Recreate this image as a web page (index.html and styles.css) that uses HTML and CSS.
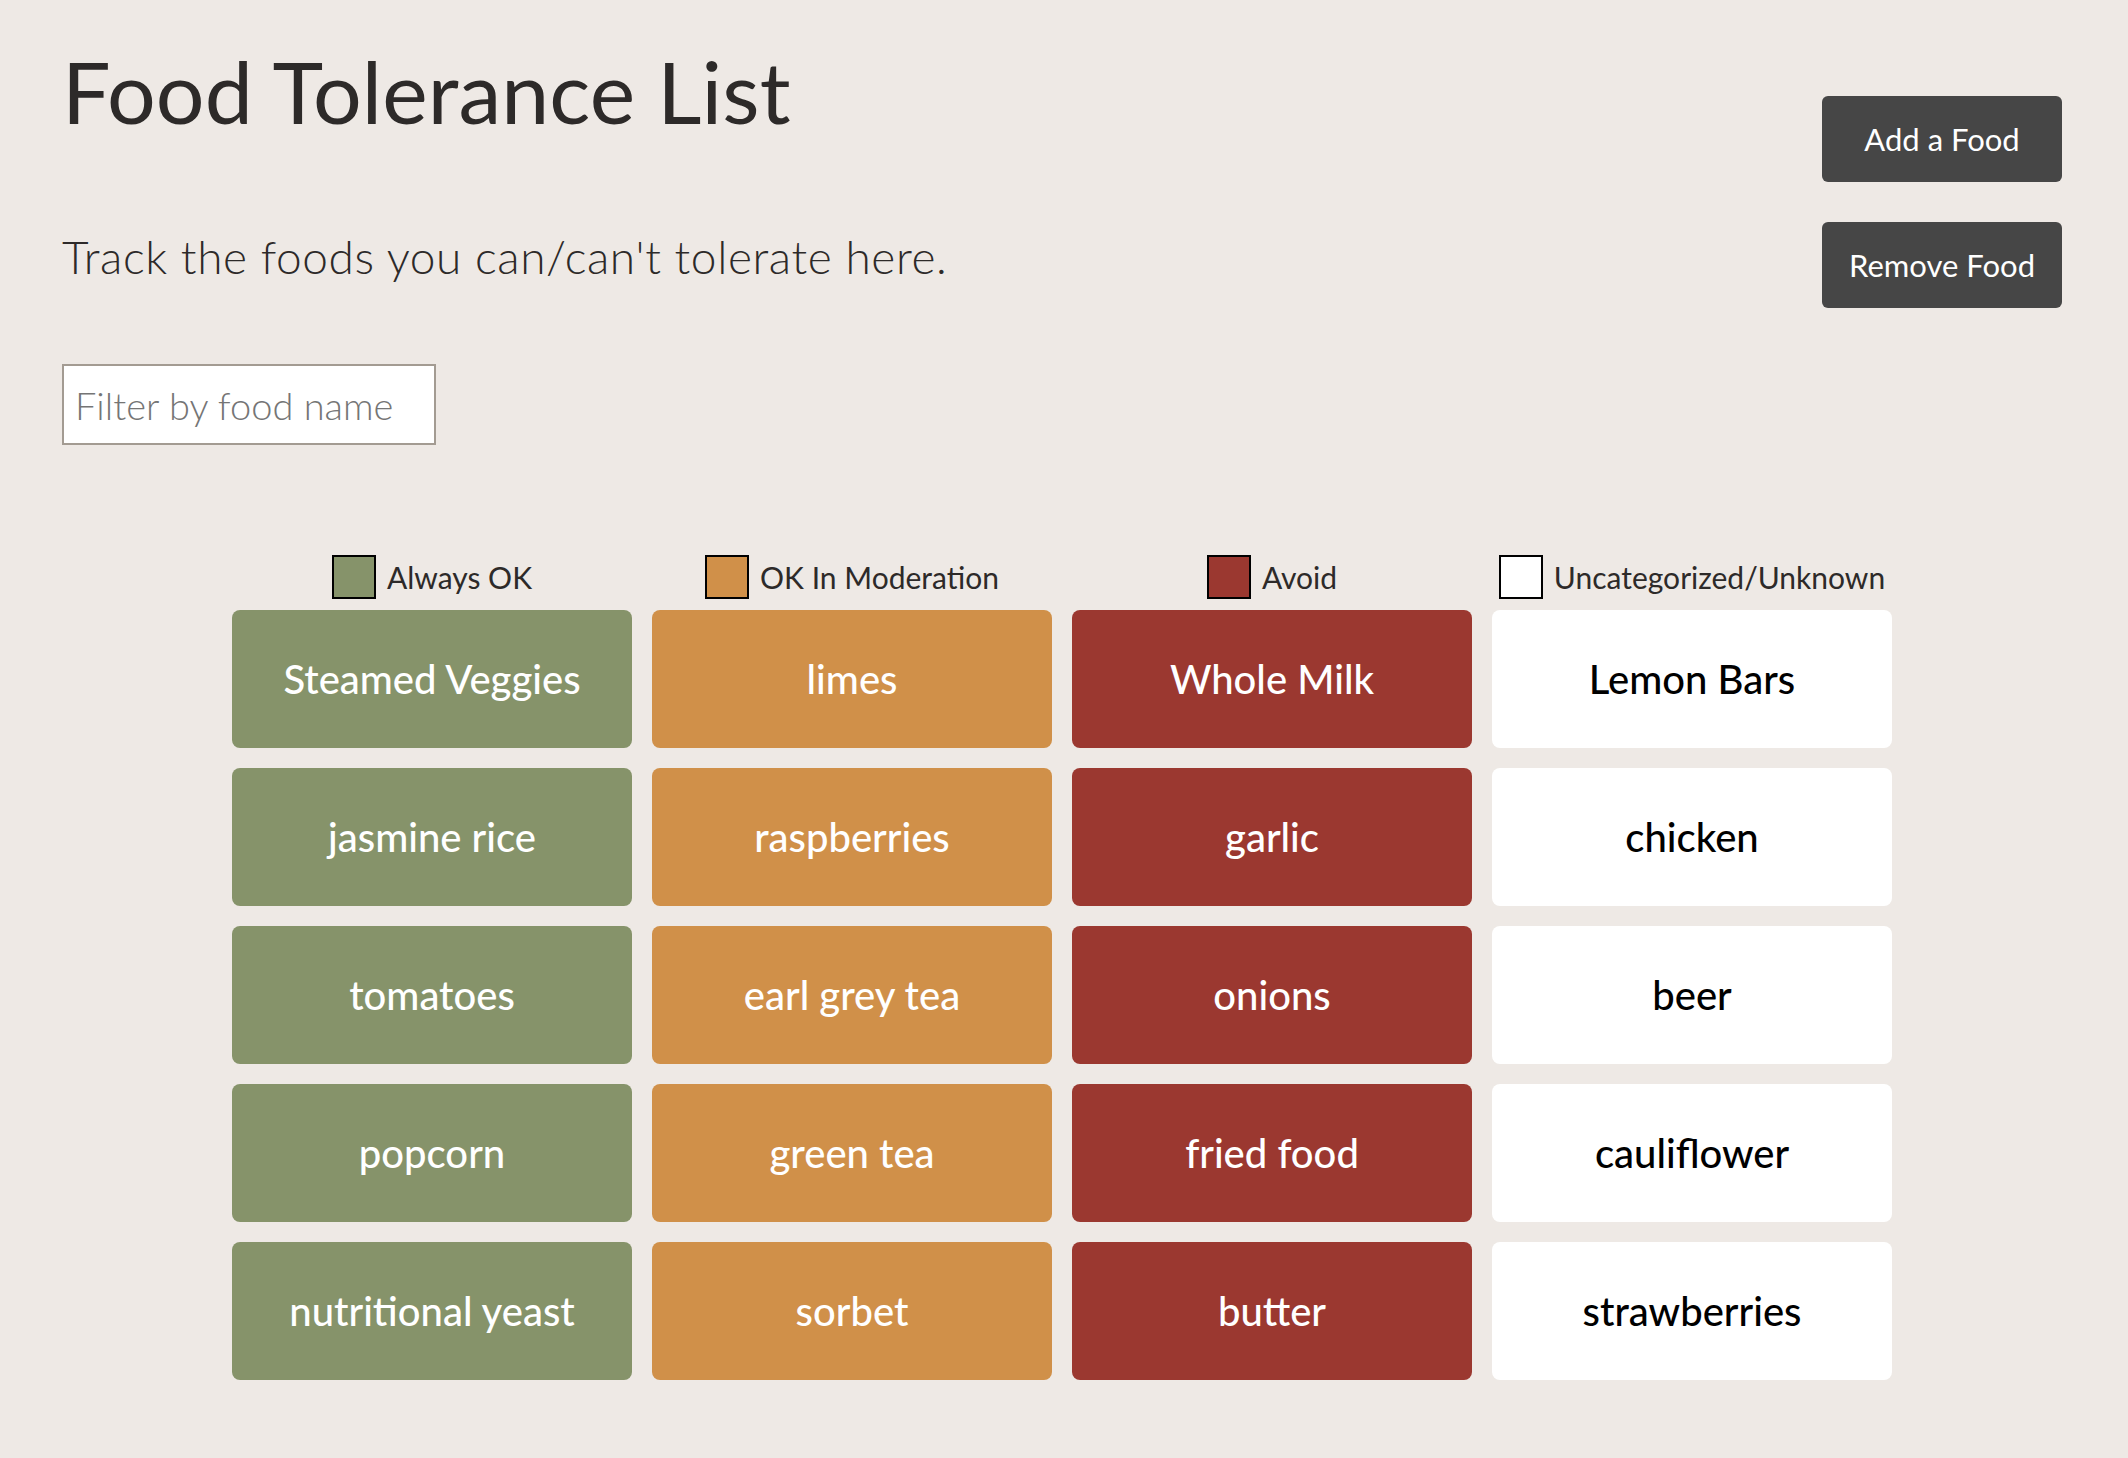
FILE: index.html
```html
<!DOCTYPE html>
<html lang="en">
<head>
<meta charset="utf-8">
<title>Food Tolerance List</title>
<link rel="stylesheet" href="styles.css">
</head>
<body>
<header class="top">
  <div class="intro">
    <h1 class="title">Food Tolerance List</h1>
    <p class="subtitle">Track the foods you can/can't tolerate here.</p>
    <input class="filter" type="text" placeholder="Filter by food name">
  </div>
  <div class="actions">
    <button class="btn">Add a Food</button>
    <button class="btn">Remove Food</button>
  </div>
</header>
<main class="board">
  <section class="column">
    <div class="legend"><span class="swatch swatch-ok"></span><span class="legend-label">Always OK</span></div>
    <div class="cards">
      <div class="card card-ok">Steamed Veggies</div>
      <div class="card card-ok">jasmine rice</div>
      <div class="card card-ok">tomatoes</div>
      <div class="card card-ok">popcorn</div>
      <div class="card card-ok">nutritional yeast</div>
    </div>
  </section>
  <section class="column">
    <div class="legend"><span class="swatch swatch-mod"></span><span class="legend-label">OK In Moderation</span></div>
    <div class="cards">
      <div class="card card-mod">limes</div>
      <div class="card card-mod">raspberries</div>
      <div class="card card-mod">earl grey tea</div>
      <div class="card card-mod">green tea</div>
      <div class="card card-mod">sorbet</div>
    </div>
  </section>
  <section class="column">
    <div class="legend"><span class="swatch swatch-avoid"></span><span class="legend-label">Avoid</span></div>
    <div class="cards">
      <div class="card card-avoid">Whole Milk</div>
      <div class="card card-avoid">garlic</div>
      <div class="card card-avoid">onions</div>
      <div class="card card-avoid">fried food</div>
      <div class="card card-avoid">butter</div>
    </div>
  </section>
  <section class="column">
    <div class="legend"><span class="swatch swatch-unknown"></span><span class="legend-label">Uncategorized/Unknown</span></div>
    <div class="cards">
      <div class="card card-unknown">Lemon Bars</div>
      <div class="card card-unknown">chicken</div>
      <div class="card card-unknown">beer</div>
      <div class="card card-unknown">cauliflower</div>
      <div class="card card-unknown">strawberries</div>
    </div>
  </section>
</main>
</body>
</html>
```

FILE: styles.css
```css
html, body {
  margin: 0;
  background: #eee9e5;
}

body {
  font-family: Lato, "Open Sans", "Liberation Sans", sans-serif;
  color: #2d2a29;
}

.top {
  display: flex;
  justify-content: space-between;
  align-items: flex-start;
  padding: 0 66px 0 62px;
}

.title {
  margin: 48px 0 0;
  font-size: 86px;
  font-weight: 400;
  line-height: 1;
  letter-spacing: 0.1px;
}

.subtitle {
  margin: 100px 0 0;
  font-size: 46px;
  font-weight: 300;
  line-height: 1;
  letter-spacing: 0.6px;
}

.filter {
  display: block;
  margin-top: 84px;
  width: 374px;
  height: 81px;
  box-sizing: border-box;
  border: 2px solid #a39b92;
  background: #fff;
  padding: 0 11px;
  font-family: Lato, "Open Sans", sans-serif;
  font-size: 38px;
  font-weight: 300;
  color: #333;
  outline: none;
}

.filter::placeholder {
  color: #757575;
}

.actions {
  display: flex;
  flex-direction: column;
  gap: 40px;
  margin-top: 96px;
}

.btn {
  width: 240px;
  height: 86px;
  border: 0;
  border-radius: 6px;
  background: #464646;
  color: #fff;
  font-family: Lato, "Open Sans", sans-serif;
  font-size: 31px;
  font-weight: 400;
  padding: 0;
}

.board {
  display: flex;
  justify-content: center;
  gap: 20px;
  margin-top: 110px;
  padding-right: 4px;
}

.column {
  width: 400px;
}

.legend {
  display: flex;
  justify-content: center;
  align-items: center;
  gap: 11px;
  height: 44px;
  margin-bottom: 11px;
  font-size: 30px;
  line-height: 1;
  color: #2d2a29;
}

.swatch {
  width: 44px;
  height: 44px;
  box-sizing: border-box;
  border: 2px solid #000;
}

.swatch-ok { background: #86936a; }
.swatch-mod { background: #d09049; }
.swatch-avoid { background: #9b3830; }
.swatch-unknown { background: #fff; }

.cards {
  display: flex;
  flex-direction: column;
  gap: 20px;
}

.card {
  height: 138px;
  border-radius: 8px;
  display: flex;
  align-items: center;
  justify-content: center;
  font-size: 40px;
  font-weight: 500;
  color: #fff;
}

.card-ok { background: #86936a; }
.card-mod { background: #d09049; }
.card-avoid { background: #9b3830; }
.card-unknown { background: #fff; color: #000; }
```
